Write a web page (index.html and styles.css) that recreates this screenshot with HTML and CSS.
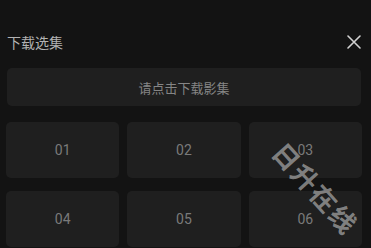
FILE: index.html
```html
<!DOCTYPE html>
<html lang="zh">
<head>
<meta charset="utf-8">
<link rel="stylesheet" href="styles.css">
</head>
<body>
<div class="panel">
  <div class="header">
    <span class="title">下载选集</span>
    <svg class="close" width="14" height="14" viewBox="0 0 14 14"><path d="M1 1L13 13M13 1L1 13" stroke="#d2d2d2" stroke-width="1.6" stroke-linecap="round"/></svg>
  </div>
  <div class="banner">请点击下载影集</div>
  <div class="grid">
    <div class="cell">01</div>
    <div class="cell">02</div>
    <div class="cell">03</div>
    <div class="cell">04</div>
    <div class="cell">05</div>
    <div class="cell">06</div>
  </div>
  <div class="watermark">日升在线</div>
</div>
</body>
</html>
```
FILE: styles.css
```css
html, body {
  margin: 0;
  padding: 0;
  background: #131313;
  width: 371px;
  height: 248px;
  overflow: hidden;
}
.panel {
  position: relative;
  width: 371px;
  height: 248px;
  overflow: hidden;
  font-family: "Noto Sans CJK SC", "Noto Sans", sans-serif;
}
.header {
  display: flex;
  align-items: center;
  justify-content: space-between;
  height: 28px;
  margin-top: 28px;
  padding: 0 10px 0 7px;
}
.title {
  font-size: 14px;
  color: #b2b2b2;
  line-height: 28px;
}
.close {
  display: block;
}
.banner {
  margin: 12px 10px 0 7px;
  height: 38px;
  border-radius: 5px;
  background: #1f1f1f;
  display: flex;
  align-items: center;
  justify-content: center;
  font-size: 13px;
  color: #858585;
}
.grid {
  margin-top: 16px;
  padding: 0 9px 0 6px;
  display: grid;
  grid-template-columns: repeat(3, 1fr);
  grid-auto-rows: 56px;
  column-gap: 8px;
  row-gap: 13px;
}
.cell {
  background: #1f1f1f;
  border-radius: 5px;
  display: flex;
  align-items: center;
  justify-content: center;
  font-family: Roboto, "Noto Sans", sans-serif;
  font-size: 14px;
  color: #7a7a7a;
}
.watermark {
  position: absolute;
  left: 258px;
  top: 173px;
  width: 116px;
  text-align: center;
  transform: rotate(48deg);
  font-size: 26px;
  font-weight: 700;
  letter-spacing: 2px;
  color: rgba(185, 185, 185, 0.65);
  white-space: nowrap;
  line-height: 30px;
}
```
